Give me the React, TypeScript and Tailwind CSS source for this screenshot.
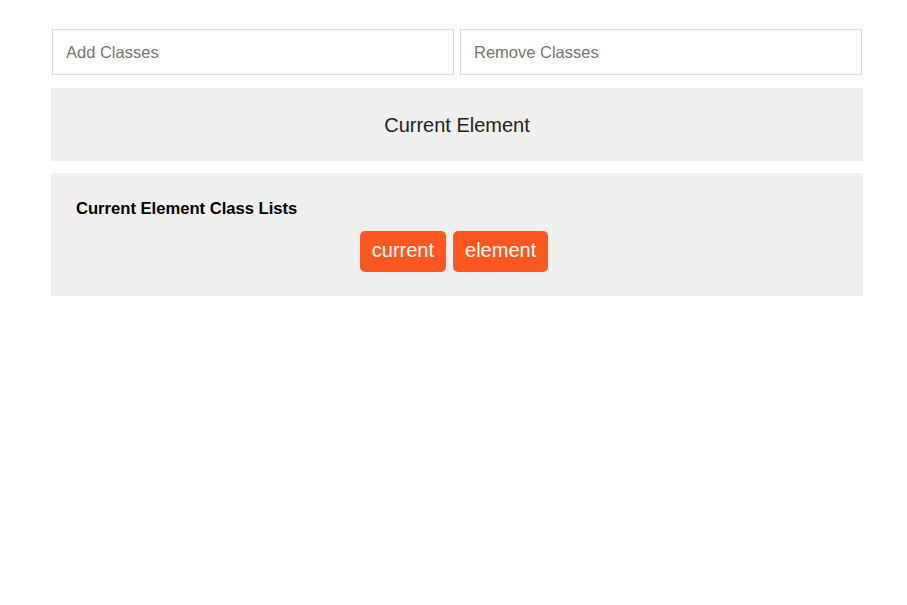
import { useState } from 'react'

export default function App() {
  const [classes] = useState<string[]>(['current', 'element'])

  return (
    <div className="min-h-screen bg-white font-['Liberation_Sans',Arial,sans-serif]">
      <div className="ml-[51px] w-[812px] pt-[29px]">
        {/* Inputs */}
        <div className="grid grid-cols-2 gap-[6px] px-px">
          <input
            type="text"
            placeholder="Add Classes"
            className="h-[46px] border border-[#dddddd] bg-white px-[13px] text-[16.5px] text-[#333] placeholder:text-[#757575] outline-none"
          />
          <input
            type="text"
            placeholder="Remove Classes"
            className="h-[46px] border border-[#dddddd] bg-white px-[13px] text-[16.5px] text-[#333] placeholder:text-[#757575] outline-none"
          />
        </div>

        {/* Current element */}
        <div className="mt-[13px] flex h-[73px] items-center justify-center bg-[#efefef]">
          <span className="text-[20px] text-[#222]">Current Element</span>
        </div>

        {/* Class list */}
        <div className="mt-[12px] bg-[#efefef] px-[25px] pb-[24px] pt-[27px]">
          <h3 className="text-[16.6px] leading-[18px] font-bold text-black">Current Element Class Lists</h3>
          <div className="mt-[13px] flex justify-center gap-[7px] pr-[6px]">
            {classes.map(c => (
              <span
                key={c}
                className="flex h-[41px] items-center rounded-[5px] bg-[#ff5722] px-[12px] pb-[3px] text-[20px] text-white"
              >
                {c}
              </span>
            ))}
          </div>
        </div>
      </div>
    </div>
  )
}
